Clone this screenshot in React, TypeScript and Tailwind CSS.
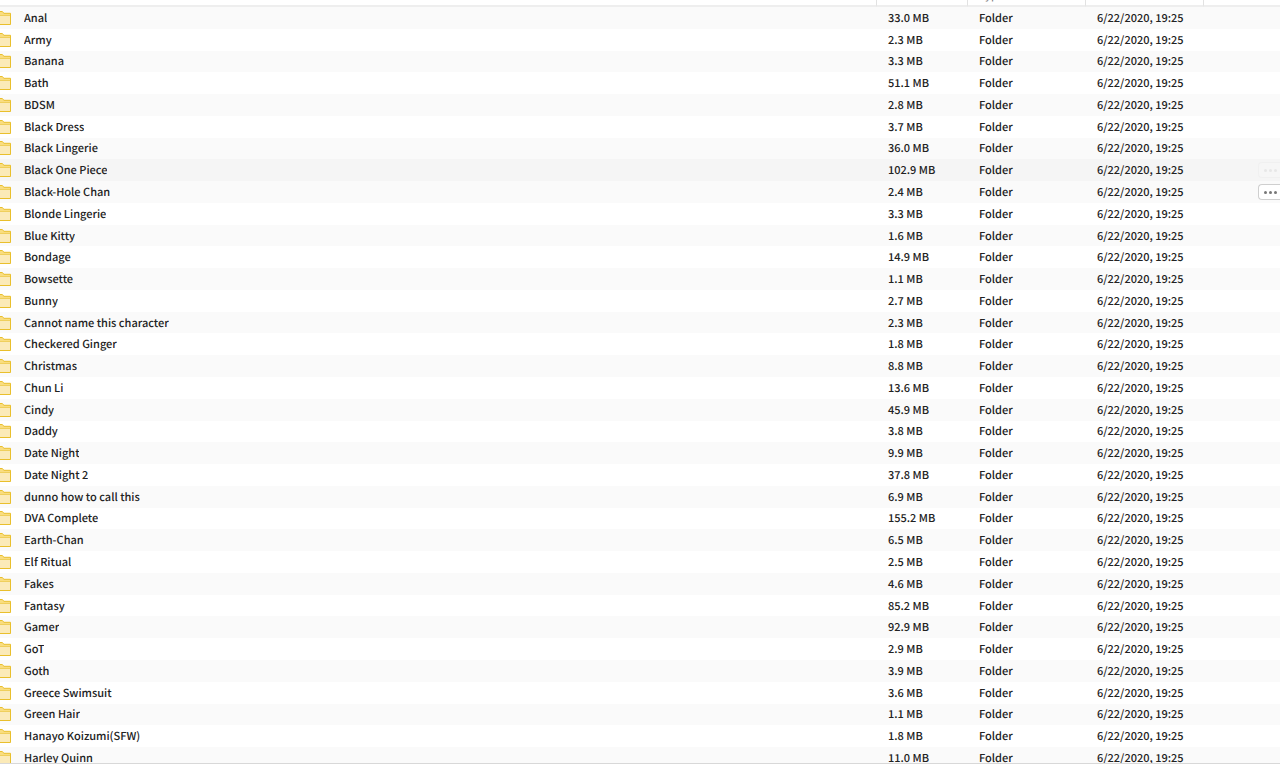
const folders: [string, string][] = [
    ["Anal", "33.0 MB"],
    ["Army", "2.3 MB"],
    ["Banana", "3.3 MB"],
    ["Bath", "51.1 MB"],
    ["BDSM", "2.8 MB"],
    ["Black Dress", "3.7 MB"],
    ["Black Lingerie", "36.0 MB"],
    ["Black One Piece", "102.9 MB"],
    ["Black-Hole Chan", "2.4 MB"],
    ["Blonde Lingerie", "3.3 MB"],
    ["Blue Kitty", "1.6 MB"],
    ["Bondage", "14.9 MB"],
    ["Bowsette", "1.1 MB"],
    ["Bunny", "2.7 MB"],
    ["Cannot name this character", "2.3 MB"],
    ["Checkered Ginger", "1.8 MB"],
    ["Christmas", "8.8 MB"],
    ["Chun Li", "13.6 MB"],
    ["Cindy", "45.9 MB"],
    ["Daddy", "3.8 MB"],
    ["Date Night", "9.9 MB"],
    ["Date Night 2", "37.8 MB"],
    ["dunno how to call this", "6.9 MB"],
    ["DVA Complete", "155.2 MB"],
    ["Earth-Chan", "6.5 MB"],
    ["Elf Ritual", "2.5 MB"],
    ["Fakes", "4.6 MB"],
    ["Fantasy", "85.2 MB"],
    ["Gamer", "92.9 MB"],
    ["GoT", "2.9 MB"],
    ["Goth", "3.9 MB"],
    ["Greece Swimsuit", "3.6 MB"],
    ["Green Hair", "1.1 MB"],
    ["Hanayo Koizumi(SFW)", "1.8 MB"],
    ["Harley Quinn", "11.0 MB"],
]

// rows that show their options button
const hovered = "Black-Hole Chan"
const fading = "Black One Piece"

function FolderIcon() {
    return (
        <svg className="block shrink-0" width={11} height={16} viewBox="7 0 11 16" aria-hidden="true">
            <path d="M0 1.5h9.2l1.8 1.8h6.5v11.2H0z" fill="#f9dd80" stroke="#e9bf2c" />
            <path d="M0 6h17v8H0z" fill="#fbeab8" />
            <path d="M0 5.5h17" stroke="#efcf5c" />
        </svg>
    )
}

function MoreButton({ name, faded }: { name: string; faded: boolean }) {
    return (
        <button
            type="button"
            aria-label={`Options for ${name}`}
            className={`flex h-4 w-[22px] items-center justify-center gap-0.5 rounded-l-sm border border-r-0 border-[#cfcfcf] bg-white pl-0.5 ${faded ? "opacity-10" : ""}`}
        >
            <span className="size-[3px] rounded-full bg-[#777]" />
            <span className="size-[3px] rounded-full bg-[#777]" />
            <span className="size-[3px] rounded-full bg-[#777]" />
        </button>
    )
}

function HeadCell({ label }: { label: string }) {
    return (
        <th scope="col" className="border-b-2 border-l border-b-[#eeeeee] border-l-[#e2e2e2] p-0 align-top">
            <div className="flex h-[3px] items-end overflow-hidden pl-[11px] text-left font-normal text-[#777]">
                <span className="leading-4">{label}</span>
            </div>
        </th>
    )
}

export default function App() {
    return (
        <main className="flex h-screen flex-col bg-white pb-px font-['Noto_Sans_CJK_SC',sans-serif] text-[11px] leading-4 font-medium text-[#222] [text-rendering:geometricPrecision]">
            <div className="min-h-0 flex-1 overflow-hidden border-b border-[#d8d8d8]">
                <table className="h-[769px] w-full table-fixed border-separate border-spacing-0">
                    <colgroup>
                        <col />
                        <col className="w-[91px]" />
                        <col className="w-[118px]" />
                        <col className="w-[118px]" />
                        <col className="w-[77px]" />
                    </colgroup>
                    <thead className="h-[7px]">
                        <tr className="h-[7px]">
                            <th scope="col" aria-label="Name" className="border-b-2 border-[#eeeeee] p-0" />
                            <HeadCell label="" />
                            <HeadCell label="Type" />
                            <HeadCell label="" />
                            <HeadCell label="" />
                        </tr>
                    </thead>
                    <tbody>
                        {folders.map(([name, size]) => (
                            <tr key={name} className={name === fading ? "bg-[#f5f5f5]" : "odd:bg-[#fafafa]"}>
                                <td className="p-0">
                                    <div className="flex items-center gap-[13px]">
                                        <FolderIcon />
                                        <span className="truncate">{name}</span>
                                    </div>
                                </td>
                                <td className="p-0 pl-3">{size}</td>
                                <td className="p-0 pl-3">Folder</td>
                                <td className="p-0 pl-3">6/22/2020, 19:25</td>
                                <td className="p-0">
                                    {(name === hovered || name === fading) && (
                                        <div className="flex justify-end">
                                            <MoreButton name={name} faded={name === fading} />
                                        </div>
                                    )}
                                </td>
                            </tr>
                        ))}
                    </tbody>
                </table>
            </div>
        </main>
    )
}
